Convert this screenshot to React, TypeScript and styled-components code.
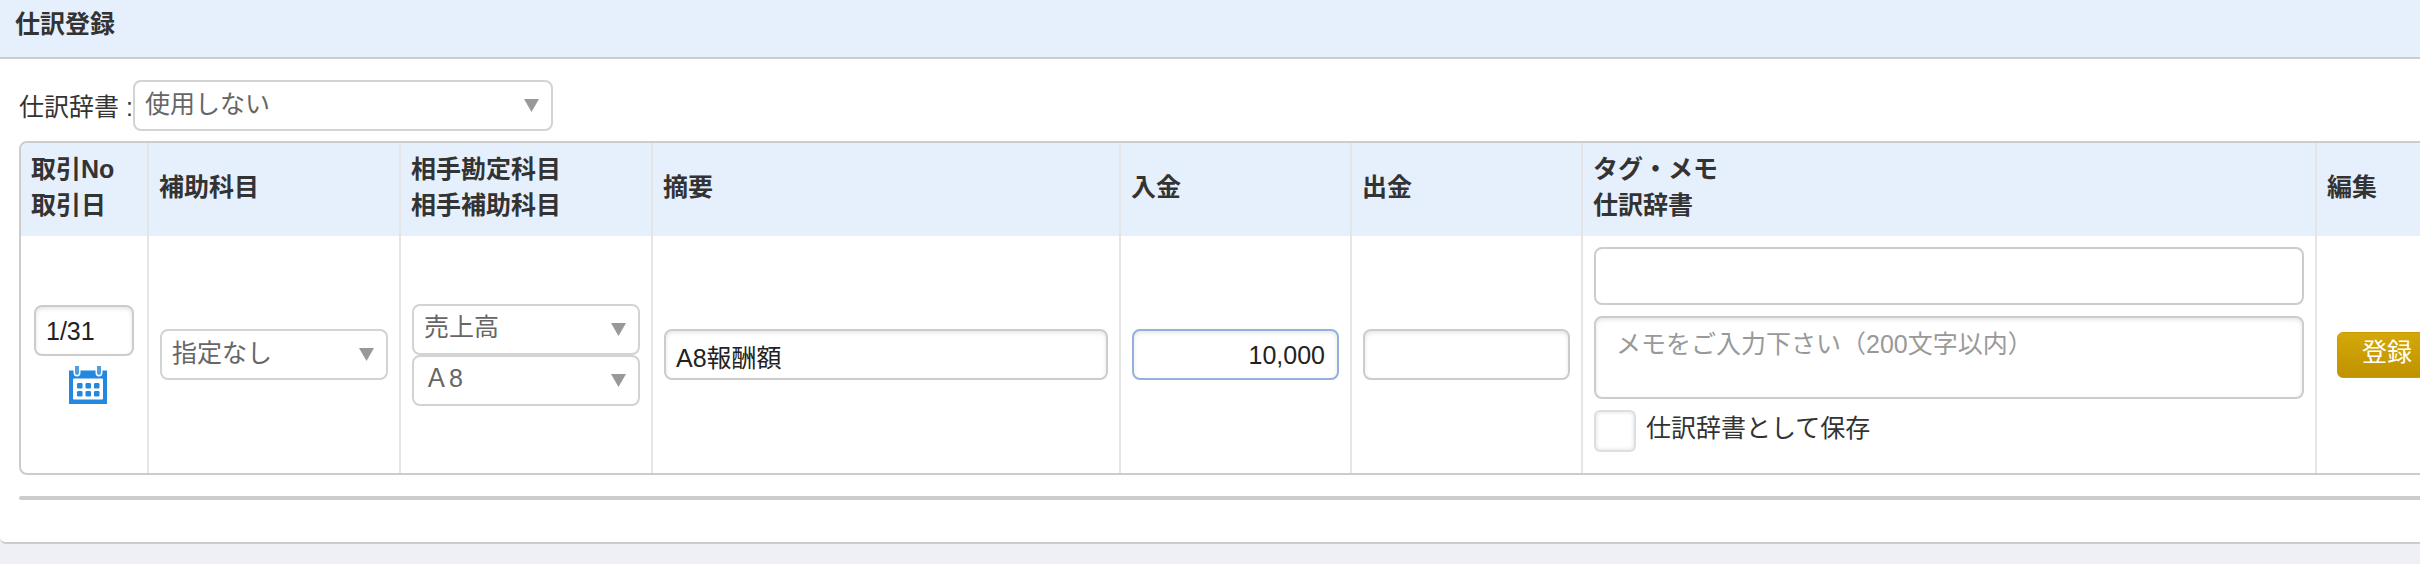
import React from "react";
import styled, { createGlobalStyle, css } from "styled-components";

const GlobalStyle = createGlobalStyle`
  *, *::before, *::after { box-sizing: border-box; }
  body {
    margin: 0;
    overflow-x: hidden;
    background: #eff0f5;
    color: #333;
    font-family: "Liberation Sans", "Noto Sans CJK JP", sans-serif;
    font-size: 25px;
    font-weight: 400;
    line-height: 36px;
  }
  input, select, textarea, button { font: inherit; margin: 0; }
`;

const Panel = styled.section`
  overflow: hidden;
  background: #fff;
  border-bottom: 2px solid #ccc;
  border-radius: 0 0 0 6px;
`;

const PanelHeader = styled.header`
  padding: 6px 15px 15px;
  background: #e6f0fc;
  border-bottom: 2px solid #ccc;
`;

const Title = styled.h1`
  margin: 0;
  font-size: 25px;
  font-weight: 700;
  line-height: 36px;
`;

/* The entry form is wider than the viewport and runs past its right edge. */
const Content = styled.form`
  margin-right: -41px;
  padding: 21px 0 42px 19px;
`;

const DictionaryRow = styled.div`
  display: flex;
  align-items: center;
  margin-bottom: 10px;
`;

const DictionaryLabel = styled.label`
  padding-top: 2px;
`;

const SelectBox = styled.div<{ $width?: string }>`
  display: grid;
  align-items: center;
  width: ${({ $width }) => $width ?? "100%"};

  > * {
    grid-area: 1 / 1;
  }
`;

const SelectControl = styled.select`
  appearance: none;
  width: 100%;
  height: 51px;
  padding: 0 36px 4px 10px;
  background: #fff;
  border: 2px solid #d3d3d3;
  border-radius: 8px;
  color: #666;
`;

const Arrow = styled.svg`
  justify-self: end;
  width: 15px;
  height: 13px;
  margin-right: 14px;
  fill: #999;
  pointer-events: none;
`;

const fieldBorder = css`
  display: block;
  width: 100%;
  background: #fff;
  border: 2px solid #ccc;
  border-radius: 8px;
  color: #222;
  outline: none;
`;

const insetShade = css`
  box-shadow: inset 0 2px 4px rgba(0, 0, 0, 0.1);
`;

const TextField = styled.input<{ $active?: boolean; $numeric?: boolean; $width?: string }>`
  ${fieldBorder}
  ${insetShade}
  width: ${({ $width }) => $width ?? "100%"};
  height: 51px;
  padding: 2px 12px 0 10px;
  border-color: ${({ $active }) => ($active ? "#94b0dc" : "#ccc")};
  text-align: ${({ $numeric }) => ($numeric ? "right" : "left")};
`;

const TagField = styled.input`
  ${fieldBorder}
  height: 58px;
  padding: 0 20px;
`;

const MemoField = styled.textarea`
  ${fieldBorder}
  ${insetShade}
  height: 83px;
  padding: 8px 20px;
  resize: none;

  &::placeholder {
    color: #999;
    opacity: 1;
  }
`;

const EntryTable = styled.table`
  width: 100%;
  table-layout: fixed;
  border: 2px solid #ccc;
  border-radius: 8px;
  border-collapse: separate;
  border-spacing: 0;
  overflow: hidden;
`;

const Column = styled.col<{ $width?: number }>`
  width: ${({ $width }) => ($width ? `${$width}px` : "auto")};
`;

const HeadCell = styled.th`
  padding: 8px 10px 13px;
  background: #e6f0fc;
  border-right: 2px solid #e5e5e5;
  font-weight: 700;
  text-align: left;
  vertical-align: middle;
`;

const Cell = styled.td<{ $centered?: boolean }>`
  padding: 11px;
  border-right: 2px solid #e5e5e5;
  text-align: ${({ $centered }) => ($centered ? "center" : "left")};
  vertical-align: middle;
`;

const MemoCell = styled(Cell)`
  padding-bottom: 21px;
`;

const MemoStack = styled.div`
  display: grid;
  gap: 11px;
`;

const DateStack = styled.div`
  display: flex;
  flex-direction: column;
  align-items: flex-end;
  padding-right: 2px;
`;

const CalendarButton = styled.button`
  display: block;
  padding: 10px 27px 0;
  background: none;
  border: 0;
  cursor: pointer;

  svg {
    display: block;
    width: 38px;
    height: 38px;
  }
`;

const SaveOption = styled.label`
  display: flex;
  align-items: flex-start;
  gap: 10px;
`;

const CheckBox = styled.input`
  appearance: none;
  flex: none;
  width: 42px;
  height: 42px;
  margin: 0;
  background: #fff;
  border: 2px solid #dcdee0;
  border-radius: 6px;
  box-shadow: inset 0 0 4px #d8dade;
`;

const SubmitButton = styled.button`
  width: 100px;
  height: 46px;
  padding: 0 0 5px;
  background: linear-gradient(#d4a808, #c09200);
  border: 1px solid #c99d02;
  border-radius: 6px;
  color: #fff;
  cursor: pointer;
`;

const Divider = styled.hr`
  height: 4px;
  margin: 21px 0 0;
  background: #ccc;
  border: 0;
  border-radius: 2px;
`;

interface SelectProps {
  id?: string;
  label?: string;
  value: string;
  width?: string;
}

function Select({ id, label, value, width }: SelectProps) {
  return (
    <SelectBox $width={width}>
      <SelectControl id={id} aria-label={label} defaultValue={value}>
        <option value={value}>{value}</option>
      </SelectControl>
      <Arrow viewBox="0 0 15 13" aria-hidden="true">
        <path d="M0 0h15L7.500 13z" />
      </Arrow>
    </SelectBox>
  );
}

function CalendarIcon() {
  return (
    <svg viewBox="0 0 38 38" aria-hidden="true">
      <path fill="#2488de" d="M0 4.500h38V38H0z" />
      <path
        fill="#fff"
        d="M4.500 0h7v6.500a3.500 4 0 0 1-7 0zM26.500 0h7v6.500a3.500 4 0 0 1-7 0z"
      />
      <path
        fill="#4f9fe3"
        d="M6 0h4v6.500a2 2.500 0 0 1-4 0zM28 0h4v6.500a2 2.500 0 0 1-4 0z"
      />
      <rect fill="#fff" x="4" y="12.500" width="30" height="21" rx="1" />
      <g fill="#2488de">
        {[8, 16.5, 25].map((x) =>
          [17, 25].map((y) => <rect key={`${x}-${y}`} x={x} y={y} width="5.500" height="5.500" rx="1.200" />)
        )}
      </g>
    </svg>
  );
}

const columnWidths = [128, 252, 252, 468, 231, 231, undefined, 142];

const headings: string[][] = [
  ["取引No", "取引日"],
  ["補助科目"],
  ["相手勘定科目", "相手補助科目"],
  ["摘要"],
  ["入金"],
  ["出金"],
  ["タグ・メモ", "仕訳辞書"],
  ["編集"],
];

export default function App() {
  return (
    <>
      <GlobalStyle />
      <Panel>
        <PanelHeader>
          <Title>仕訳登録</Title>
        </PanelHeader>
        <Content onSubmit={(event) => event.preventDefault()}>
          <DictionaryRow>
            <DictionaryLabel htmlFor="dictionary">仕訳辞書 :</DictionaryLabel>
            <Select id="dictionary" value="使用しない" width="420px" />
          </DictionaryRow>

          <EntryTable>
            <colgroup>
              {columnWidths.map((width, index) => (
                <Column key={index} $width={width} />
              ))}
            </colgroup>
            <thead>
              <tr>
                {headings.map((lines) => (
                  <HeadCell key={lines[0]} scope="col">
                    {lines.map((line, index) => (
                      <React.Fragment key={line}>
                        {index > 0 && <br />}
                        {line}
                      </React.Fragment>
                    ))}
                  </HeadCell>
                ))}
              </tr>
            </thead>
            <tbody>
              <tr>
                <Cell>
                  <DateStack>
                    <TextField $width="100px" aria-label="取引日" defaultValue="1/31" />
                    <CalendarButton type="button" aria-label="カレンダー">
                      <CalendarIcon />
                    </CalendarButton>
                  </DateStack>
                </Cell>
                <Cell>
                  <Select label="補助科目" value="指定なし" />
                </Cell>
                <Cell>
                  <Select label="相手勘定科目" value="売上高" />
                  <Select label="相手補助科目" value="Ａ8" />
                </Cell>
                <Cell>
                  <TextField aria-label="摘要" defaultValue="A8報酬額" />
                </Cell>
                <Cell>
                  <TextField $active $numeric aria-label="入金" defaultValue="10,000" />
                </Cell>
                <Cell>
                  <TextField $numeric aria-label="出金" />
                </Cell>
                <MemoCell>
                  <MemoStack>
                    <TagField aria-label="タグ" />
                    <MemoField aria-label="メモ" placeholder="メモをご入力下さい（200文字以内）" />
                    <SaveOption>
                      <CheckBox type="checkbox" />
                      仕訳辞書として保存
                    </SaveOption>
                  </MemoStack>
                </MemoCell>
                <Cell $centered>
                  <SubmitButton type="submit">登録</SubmitButton>
                </Cell>
              </tr>
            </tbody>
          </EntryTable>
          <Divider />
        </Content>
      </Panel>
    </>
  );
}
